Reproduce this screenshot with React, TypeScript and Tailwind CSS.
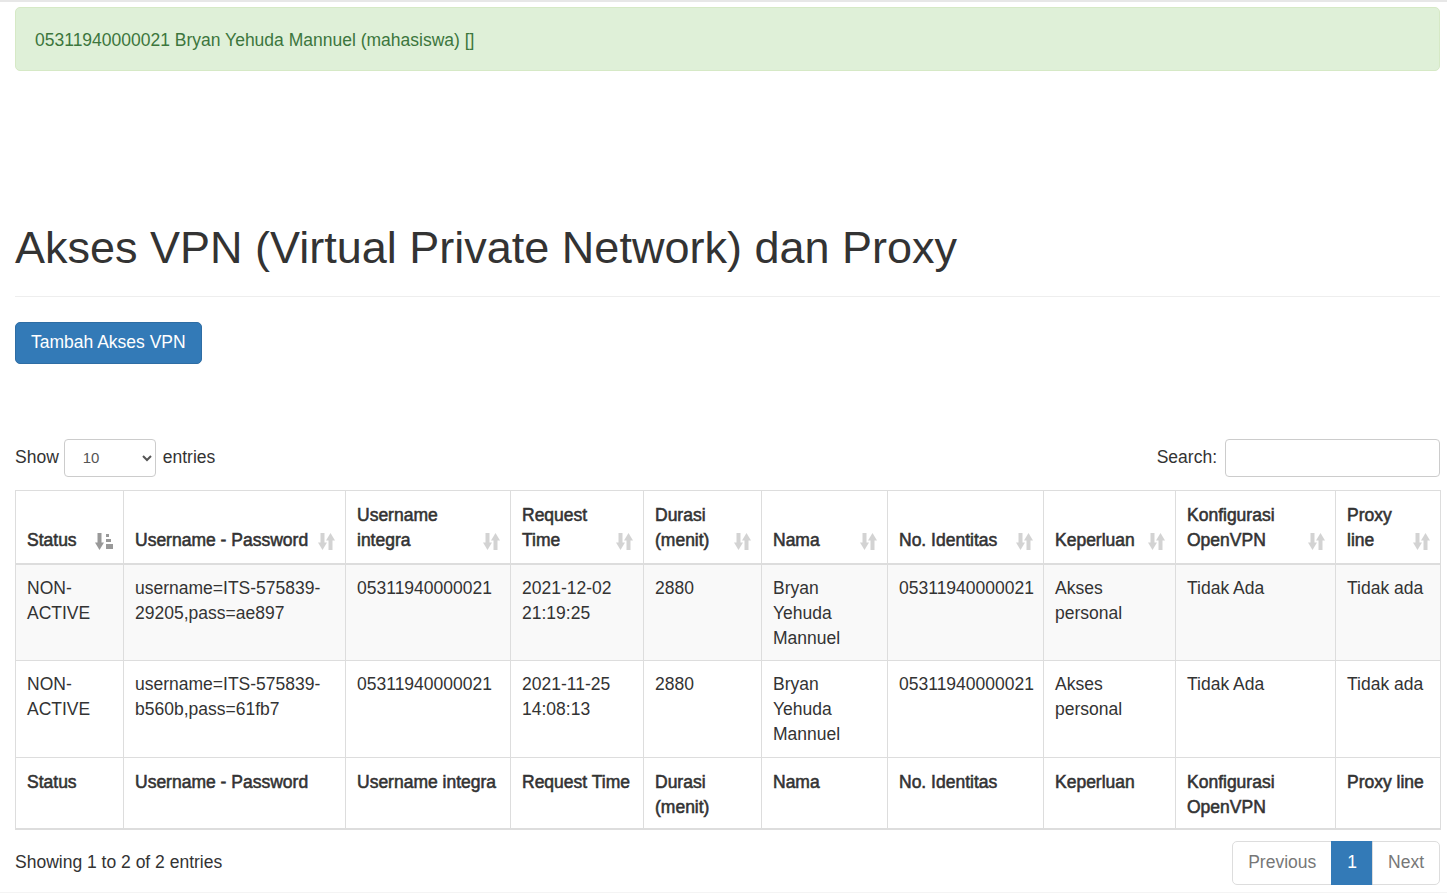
import React from 'react';

type Row = {
  status: string;
  userpass: string;
  integra: string;
  time: string;
  durasi: string;
  nama: string;
  identitas: string;
  keperluan: string;
  openvpn: string;
  proxy: string;
};

const rows: Row[] = [
  {
    status: 'NON-ACTIVE',
    userpass: 'username=ITS-575839-29205,pass=ae897',
    integra: '05311940000021',
    time: '2021-12-02 21:19:25',
    durasi: '2880',
    nama: 'Bryan Yehuda Mannuel',
    identitas: '05311940000021',
    keperluan: 'Akses personal',
    openvpn: 'Tidak Ada',
    proxy: 'Tidak ada',
  },
  {
    status: 'NON-ACTIVE',
    userpass: 'username=ITS-575839-b560b,pass=61fb7',
    integra: '05311940000021',
    time: '2021-11-25 14:08:13',
    durasi: '2880',
    nama: 'Bryan Yehuda Mannuel',
    identitas: '05311940000021',
    keperluan: 'Akses personal',
    openvpn: 'Tidak Ada',
    proxy: 'Tidak ada',
  },
];

const columns = [
  { label: 'Status', width: 108 },
  { label: 'Username - Password', width: 222 },
  { label: 'Username integra', width: 165 },
  { label: 'Request Time', width: 133 },
  { label: 'Durasi (menit)', width: 118 },
  { label: 'Nama', width: 126 },
  { label: 'No. Identitas', width: 156 },
  { label: 'Keperluan', width: 132 },
  { label: 'Konfigurasi OpenVPN', width: 160 },
  { label: 'Proxy line', width: 105 },
];

// headers render bold-looking but keep regular advance widths
const heavy = '[-webkit-text-stroke:0.55px_#333] font-normal';

function SortIcon() {
  return (
    <svg width="17" height="17" viewBox="0 0 17 17" fill="#d3d3d3">
      <rect x="2.5" y="0" width="4" height="11" />
      <polygon points="0,9.5 9,9.5 4.5,17" />
      <polygon points="8,7.5 17,7.5 12.5,0" />
      <rect x="10.5" y="6" width="4" height="11" />
    </svg>
  );
}

function SortAscIcon() {
  return (
    <svg width="18" height="17" viewBox="0 0 18 17" fill="#999">
      <rect x="2.5" y="0" width="4" height="11" />
      <polygon points="0,9.5 9,9.5 4.5,17" />
      <rect x="11" y="1" width="3" height="3" />
      <rect x="11" y="6" width="5" height="3" />
      <rect x="11" y="11" width="7" height="5" />
    </svg>
  );
}

export default function App() {
  return (
    <div className="min-h-screen bg-white font-['Liberation_Sans',Arial,sans-serif] text-[17.5px] leading-[25px] text-[#333]">
      <div className="h-[2px] bg-[#e7e7e7]" />
      <div className="pl-[15px] pr-[7px]">
        <div className="mt-[5px] rounded-[5px] border border-[#d6e9c6] bg-[#dff0d8] px-[19px] pb-[17px] pt-[20px] text-[#3c763d]">
          05311940000021 Bryan Yehuda Mannuel (mahasiswa) []
        </div>

        <div className="mt-[152px] border-b border-[#eee] pb-[23px]">
          <h1 className="text-[45px] font-normal leading-[49.5px] text-[#333]">
            Akses VPN (Virtual Private Network) dan Proxy
          </h1>
        </div>

        <button className="mt-[25px] rounded-[5px] border border-[#2e6da4] bg-[#337ab7] px-[15px] py-[7.5px] text-[17.5px] leading-[25px] text-white">
          Tambah Akses VPN
        </button>

        <div className="mt-[75px] flex h-[38px] items-center justify-between">
          <div className="flex items-center">
            <span>Show</span>
            <select
              defaultValue="10"
              className="ml-[5px] h-[38px] w-[92px] rounded-[4px] border border-[#ccc] bg-white pl-[14px] pr-[6px] text-[15px] text-[#555]"
            >
              <option value="10">10</option>
              <option value="25">25</option>
              <option value="50">50</option>
              <option value="100">100</option>
            </select>
            <span className="ml-[7px]">entries</span>
          </div>
          <div className="flex items-center">
            <span>Search:</span>
            <input className="ml-[8px] h-[38px] w-[215px] rounded-[4px] border border-[#ccc] bg-white px-[12px] text-[15px] outline-none" />
          </div>
        </div>

        <table className="mt-[13px] w-full table-fixed border-collapse">
          <colgroup>
            {columns.map((c) => (
              <col key={c.label} style={{ width: c.width }} />
            ))}
          </colgroup>
          <thead>
            <tr>
              {columns.map((c, i) => (
                <th
                  key={c.label}
                  className={`relative border border-b-2 border-[#ddd] pb-[9.5px] pl-[11px] pr-[30px] pt-[12.5px] text-left align-bottom ${heavy}`}
                >
                  {c.label}
                  <span className="absolute bottom-[13px] right-[10px] flex">
                    {i === 0 ? <SortAscIcon /> : <SortIcon />}
                  </span>
                </th>
              ))}
            </tr>
          </thead>
          <tbody>
            {rows.map((r, idx) => (
              <tr key={idx} className={idx % 2 === 0 ? 'h-[96px] bg-[#f9f9f9]' : 'h-[97px] bg-white'}>
                {[r.status, r.userpass, r.integra, r.time, r.durasi, r.nama, r.identitas, r.keperluan, r.openvpn, r.proxy].map(
                  (v, i) => (
                    <td key={i} className="border border-[#ddd] pb-[8.5px] pl-[11px] pr-[9px] pt-[11.5px] align-top">
                      {v}
                    </td>
                  )
                )}
              </tr>
            ))}
          </tbody>
          <tfoot>
            <tr>
              {columns.map((c) => (
                <th
                  key={c.label}
                  className={`border border-b-2 border-[#ddd] pb-[7.5px] pl-[11px] pr-[9px] pt-[12.5px] text-left align-top ${heavy}`}
                >
                  {c.label}
                </th>
              ))}
            </tr>
          </tfoot>
        </table>

        <div className="mt-[11px] flex items-center justify-between">
          <div>Showing 1 to 2 of 2 entries</div>
          <div className="flex">
            <span className="rounded-l-[5px] border border-[#ddd] bg-white px-[15px] py-[8.5px] text-[#777]">
              Previous
            </span>
            <span className="-ml-px border border-[#337ab7] bg-[#337ab7] px-[15px] py-[8.5px] text-white">
              1
            </span>
            <span className="-ml-px rounded-r-[5px] border border-[#ddd] bg-white px-[15px] py-[8.5px] text-[#777]">
              Next
            </span>
          </div>
        </div>
      </div>
      <div className="mt-[7px] h-[10px] bg-[#f4f4f4]" />
    </div>
  );
}
